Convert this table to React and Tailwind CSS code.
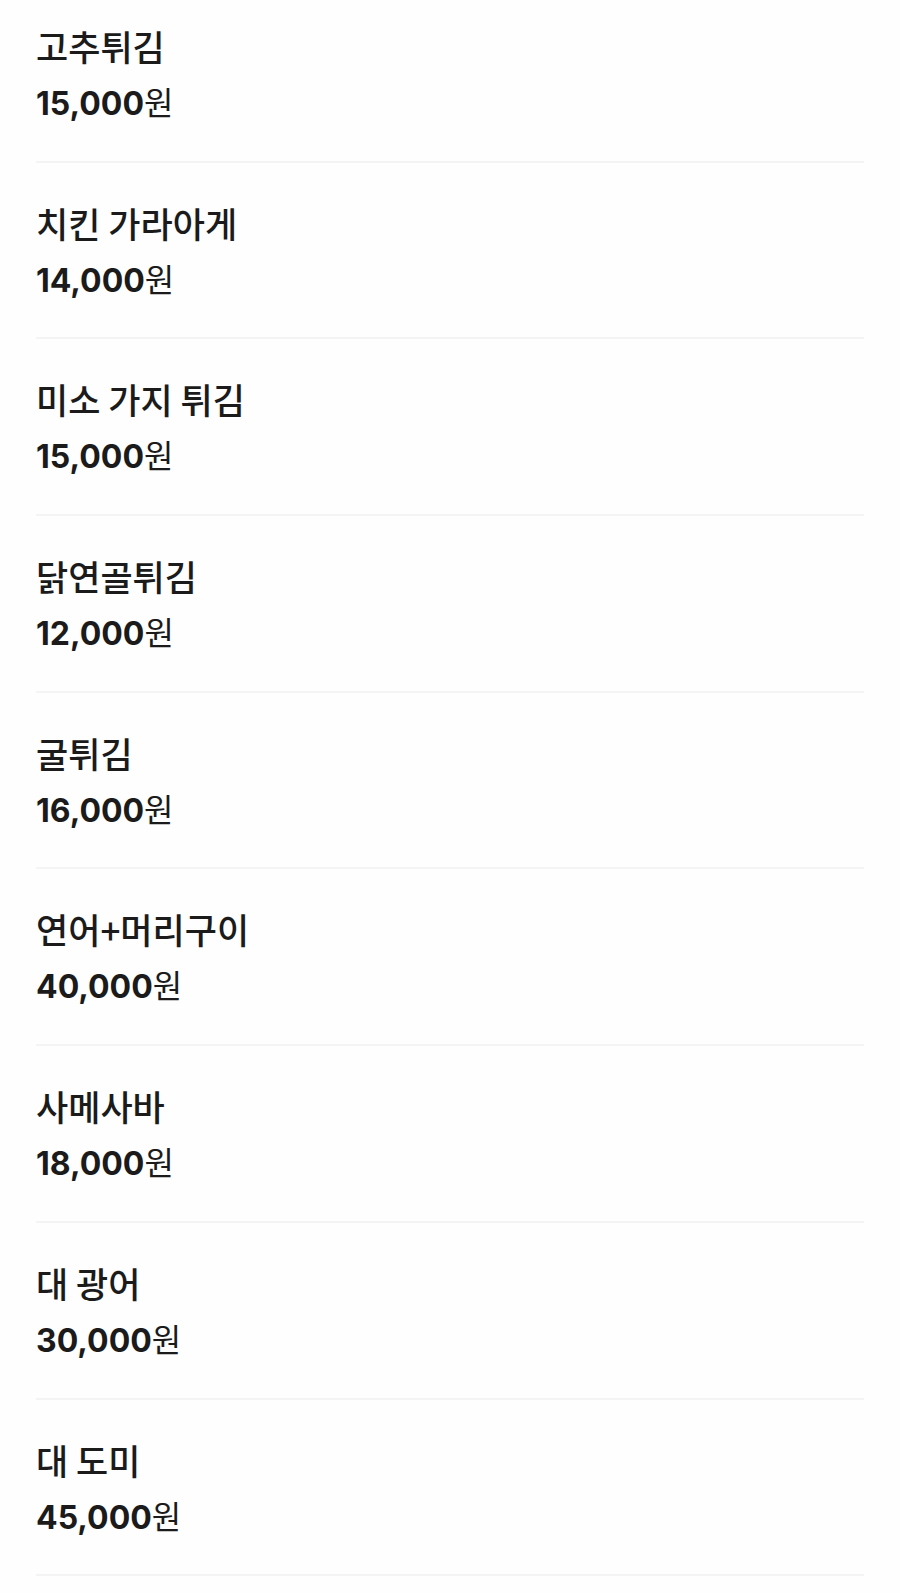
const menu = [
  { name: '고추튀김', price: '15,000' },
  { name: '치킨 가라아게', price: '14,000' },
  { name: '미소 가지 튀김', price: '15,000' },
  { name: '닭연골튀김', price: '12,000' },
  { name: '굴튀김', price: '16,000' },
  { name: '연어+머리구이', price: '40,000' },
  { name: '사메사바', price: '18,000' },
  { name: '대 광어', price: '30,000' },
  { name: '대 도미', price: '45,000' },
]

export default function App() {
  return (
    <div className="min-h-screen bg-[#fefefe] overflow-hidden text-[#1b1b1b] font-['Inter','Noto_Sans_CJK_KR',sans-serif]">
      <div className="-mt-[14px] px-[36px]">
        {menu.map((item) => (
          <div key={item.name} className="pt-[40px] pb-[39.7px] border-b-2 border-[#f4f4f4]">
            <div className="h-[40px] text-[35px] leading-[40px] font-medium font-['Noto_Sans_CJK_KR',sans-serif] whitespace-nowrap">
              {item.name}
            </div>
            <div className="mt-[15px] h-[40px] flex items-baseline text-[32px] leading-[40px] whitespace-nowrap">
              <span className="font-bold">{item.price}</span>
              <span className="font-['Noto_Sans_CJK_KR',sans-serif] font-normal">원</span>
            </div>
          </div>
        ))}
      </div>
    </div>
  )
}
